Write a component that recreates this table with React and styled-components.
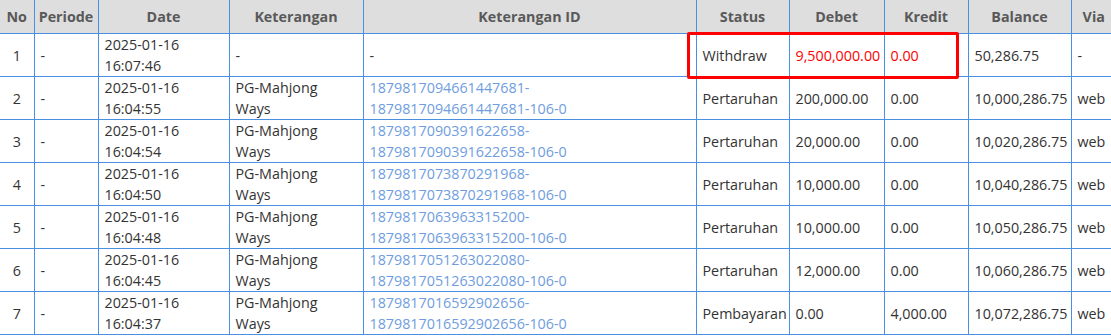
import styled, { createGlobalStyle } from "styled-components";

const GlobalStyle = createGlobalStyle`
  html, body {
    margin: 0;
    padding: 0;
    background: #fff;
    overflow: hidden;
  }
  body {
    font-family: "Open Sans", "Noto Sans", "Liberation Sans", sans-serif;
    font-size: 14.3px;
    color: #333;
  }
`;

const Wrapper = styled.div`
  position: relative;
  width: 1111px;
  height: 336px;
  overflow: hidden;
`;

const Table = styled.table`
  width: 1116px;
  table-layout: fixed;
  border-collapse: collapse;
`;

const HeadCell = styled.th`
  height: 33px;
  padding: 0 4px;
  background: #dedede;
  color: #595959;
  font-weight: 700;
  text-align: center;
  border-bottom: 1px solid #4a90e2;
  border-left: ${(p) => (p.$first ? "none" : "1px solid #4a90e2")};
  white-space: nowrap;
`;

const Cell = styled.td`
  height: 42px;
  padding: 0 6px;
  line-height: 21px;
  vertical-align: middle;
  text-align: ${(p) => (p.$center ? "center" : "left")};
  color: ${(p) => (p.$red ? "#f00" : p.$link ? "#6f9de0" : "#333")};
  border-bottom: 1px solid #4a90e2;
  border-left: ${(p) => (p.$first ? "none" : "1px solid #4a90e2")};
  white-space: nowrap;
`;

const Highlight = styled.div`
  position: absolute;
  left: 687px;
  top: 32px;
  width: 272px;
  height: 47px;
  box-sizing: border-box;
  border: 3px solid #f00;
  border-radius: 2px;
  pointer-events: none;
`;

const columns = [
  { label: "No", width: 34 },
  { label: "Periode", width: 64 },
  { label: "Date", width: 131 },
  { label: "Keterangan", width: 134 },
  { label: "Keterangan ID", width: 333 },
  { label: "Status", width: 93 },
  { label: "Debet", width: 95 },
  { label: "Kredit", width: 84 },
  { label: "Balance", width: 103 },
  { label: "Via", width: 45 },
];

const rows = [
  { no: 1, date: "16:07:46", ket: null, id: null, status: "Withdraw", debet: "9,500,000.00", kredit: "0.00", balance: "50,286.75", via: "-", red: true },
  { no: 2, date: "16:04:55", ket: "PG-Mahjong", id: "1879817094661447681", status: "Pertaruhan", debet: "200,000.00", kredit: "0.00", balance: "10,000,286.75", via: "web" },
  { no: 3, date: "16:04:54", ket: "PG-Mahjong", id: "1879817090391622658", status: "Pertaruhan", debet: "20,000.00", kredit: "0.00", balance: "10,020,286.75", via: "web" },
  { no: 4, date: "16:04:50", ket: "PG-Mahjong", id: "1879817073870291968", status: "Pertaruhan", debet: "10,000.00", kredit: "0.00", balance: "10,040,286.75", via: "web" },
  { no: 5, date: "16:04:48", ket: "PG-Mahjong", id: "1879817063963315200", status: "Pertaruhan", debet: "10,000.00", kredit: "0.00", balance: "10,050,286.75", via: "web" },
  { no: 6, date: "16:04:45", ket: "PG-Mahjong", id: "1879817051263022080", status: "Pertaruhan", debet: "12,000.00", kredit: "0.00", balance: "10,060,286.75", via: "web" },
  { no: 7, date: "16:04:37", ket: "PG-Mahjong", id: "1879817016592902656", status: "Pembayaran", debet: "0.00", kredit: "4,000.00", balance: "10,072,286.75", via: "web" },
];

export default function App() {
  return (
    <>
      <GlobalStyle />
      <Wrapper>
        <Table>
          <colgroup>
            {columns.map((c) => (
              <col key={c.label} style={{ width: c.width }} />
            ))}
          </colgroup>
          <thead>
            <tr>
              {columns.map((c, i) => (
                <HeadCell key={c.label} $first={i === 0}>
                  {c.label}
                </HeadCell>
              ))}
            </tr>
          </thead>
          <tbody>
            {rows.map((r) => (
              <tr key={r.no}>
                <Cell $first $center>{r.no}</Cell>
                <Cell>-</Cell>
                <Cell>
                  2025-01-16
                  <br />
                  {r.date}
                </Cell>
                <Cell>
                  {r.ket ? (
                    <>
                      {r.ket}
                      <br />
                      Ways
                    </>
                  ) : (
                    "-"
                  )}
                </Cell>
                {r.id ? (
                  <Cell $link>
                    {r.id}-
                    <br />
                    {r.id}-106-0
                  </Cell>
                ) : (
                  <Cell>-</Cell>
                )}
                <Cell>{r.status}</Cell>
                <Cell $red={r.red}>{r.debet}</Cell>
                <Cell $red={r.red}>{r.kredit}</Cell>
                <Cell>{r.balance}</Cell>
                <Cell>{r.via}</Cell>
              </tr>
            ))}
          </tbody>
        </Table>
        <Highlight />
      </Wrapper>
    </>
  );
}
